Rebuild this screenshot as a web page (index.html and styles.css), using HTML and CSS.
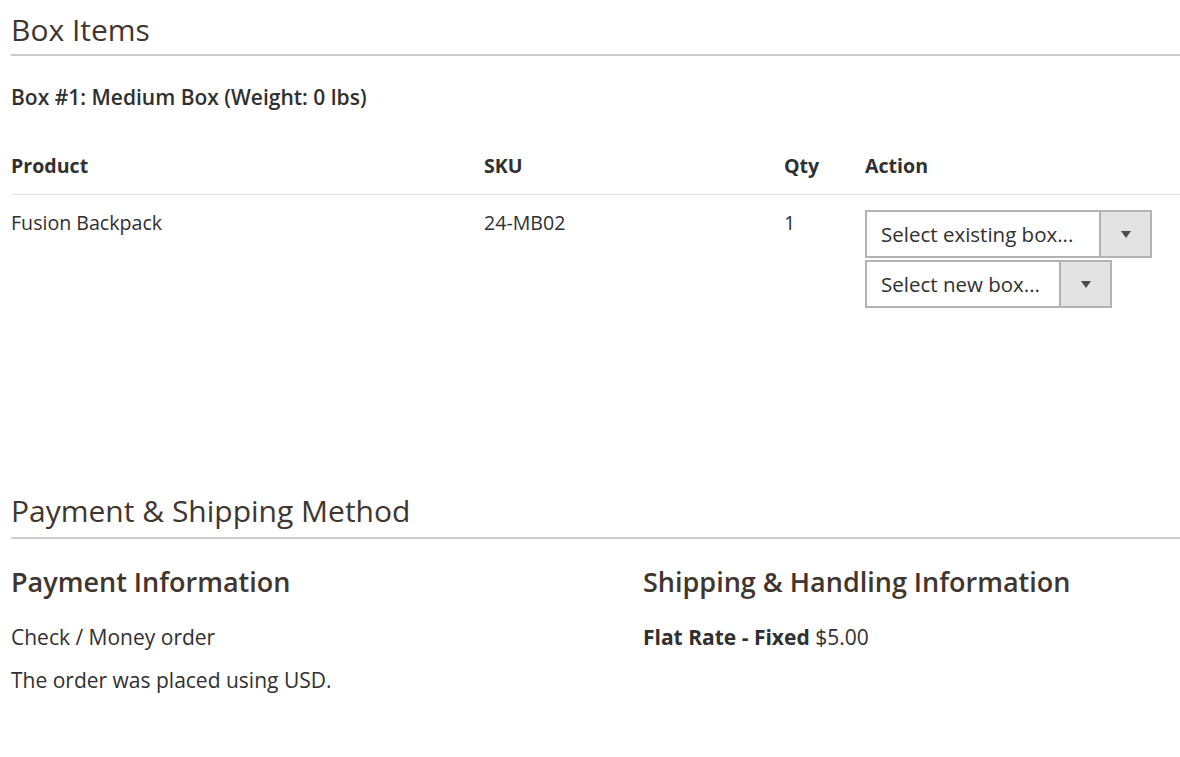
FILE: index.html
```html
<!DOCTYPE html>
<html>
<head>
<meta charset="utf-8">
<link rel="stylesheet" href="styles.css">
</head>
<body>
<div class="page">
  <section class="section">
    <div class="section-title">Box Items</div>
    <div class="box-title">Box #1: Medium Box (Weight: 0 lbs)</div>
    <div class="grid head">
      <div>Product</div>
      <div>SKU</div>
      <div>Qty</div>
      <div>Action</div>
    </div>
    <div class="grid row">
      <div>Fusion Backpack</div>
      <div>24-MB02</div>
      <div>1</div>
      <div class="actions">
        <div class="select select-existing"><span class="select-text">Select existing box...</span><span class="select-arrow"><span class="tri"></span></span></div>
        <div class="select select-new"><span class="select-text">Select new box...</span><span class="select-arrow"><span class="tri"></span></span></div>
      </div>
    </div>
  </section>
  <section class="section second">
    <div class="section-title">Payment &amp; Shipping Method</div>
    <div class="cols">
      <div class="col">
        <div class="item-title">Payment Information</div>
        <div class="text first">Check / Money order</div>
        <div class="text">The order was placed using USD.</div>
      </div>
      <div class="col">
        <div class="item-title">Shipping &amp; Handling Information</div>
        <div class="text first"><strong>Flat Rate - Fixed</strong> $5.00</div>
      </div>
    </div>
  </section>
</div>
</body>
</html>
```
FILE: styles.css
```css
html, body {
  margin: 0;
  padding: 0;
  background: #fff;
}
body {
  font-family: "Open Sans", "Noto Sans", sans-serif;
  color: #303030;
  font-size: 21px;
}
.page {
  padding: 10px 0 0 11px;
}
.section-title {
  font-size: 30px;
  line-height: 40px;
  color: #41362f;
  font-weight: 400;
  padding-bottom: 4px;
  border-bottom: 2px solid #cccccc;
}
.second .section-title {
  padding-bottom: 6px;
}
.box-title {
  margin-top: 27px;
  font-weight: 600;
  line-height: 29px;
  color: #303030;
}
.grid {
  display: grid;
  grid-template-columns: 473px 300px 81px 1fr;
  font-size: 19.6px;
}
.head {
  margin-top: 40px;
  font-weight: 700;
  line-height: 27px;
  padding-bottom: 15px;
  border-bottom: 1px solid #e3e3e3;
}
.row {
  padding-top: 14px;
  line-height: 27px;
}
.actions {
  display: flex;
  flex-direction: column;
  align-items: flex-start;
  gap: 2px;
  margin-top: 1px;
}
.select {
  display: flex;
  height: 44px;
  border: 2px solid #b3b3b3;
  background: #fff;
  box-sizing: content-box;
}
.select-existing {
  width: 283px;
}
.select-new {
  width: 243px;
}
.select-text {
  flex: 1;
  display: flex;
  align-items: center;
  padding: 0 0 0 14px;
  font-size: 20.5px;
  color: #303030;
  white-space: nowrap;
}
.select-arrow {
  width: 49px;
  flex: none;
  background: #e3e3e3;
  border-left: 2px solid #b3b3b3;
  display: flex;
  align-items: center;
  justify-content: center;
}
.tri {
  width: 0;
  height: 0;
  border-left: 5.5px solid transparent;
  border-right: 5.5px solid transparent;
  border-top: 7px solid #514943;
}
.second {
  margin-top: 183px;
}
.cols {
  display: grid;
  grid-template-columns: 632px 1fr;
  margin-top: 24px;
}
.item-title {
  font-size: 27px;
  font-weight: 600;
  line-height: 37px;
  color: #41362f;
}
.text {
  line-height: 29px;
  margin-top: 14px;
}
.text.first {
  margin-top: 23px;
}
.text strong {
  font-weight: 700;
}
```
